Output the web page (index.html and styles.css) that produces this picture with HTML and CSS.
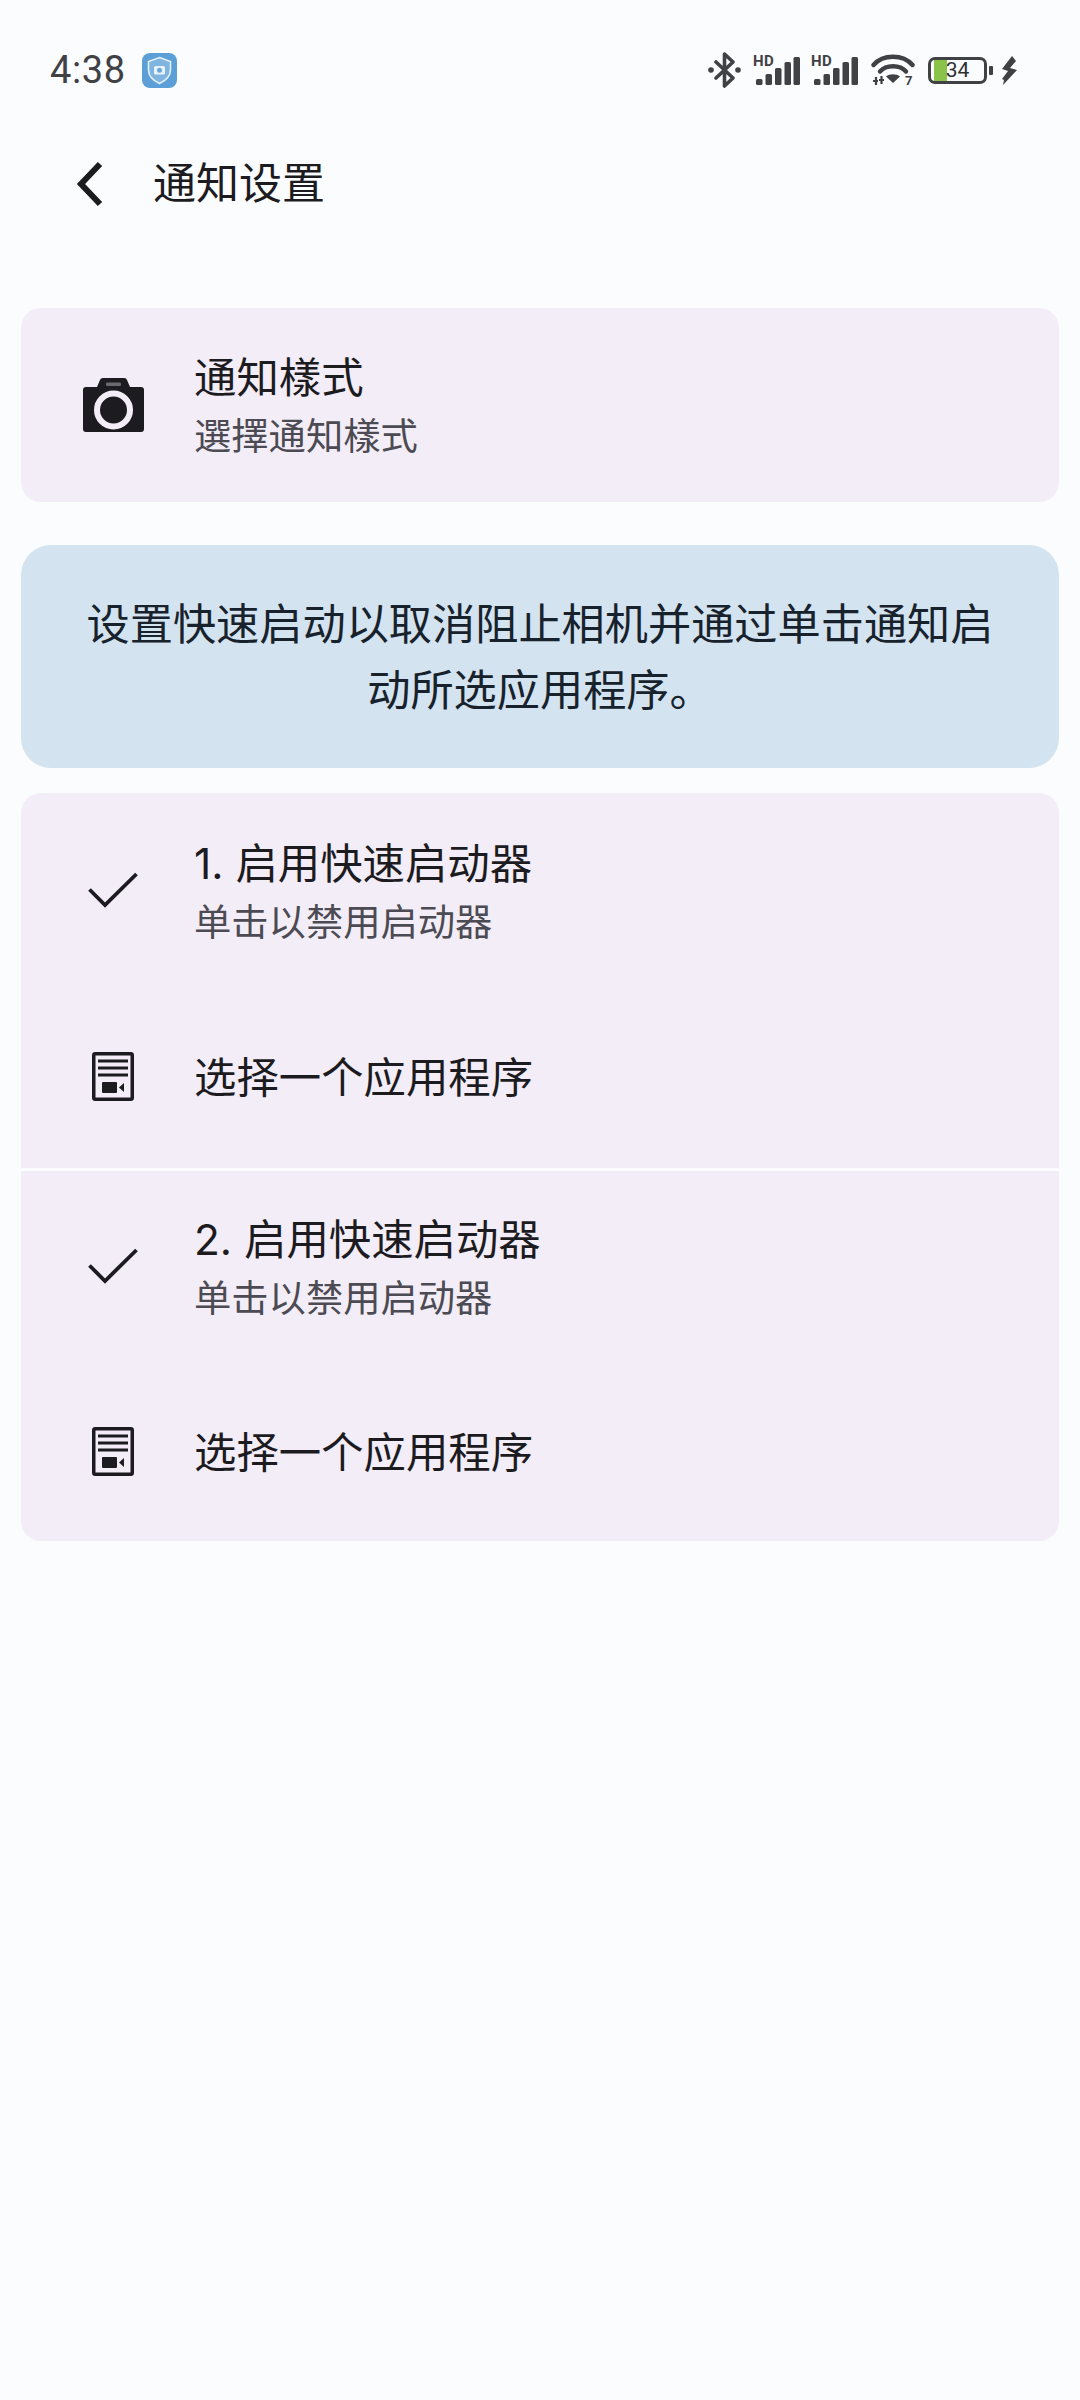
FILE: index.html
```html
<!DOCTYPE html>
<html lang="zh-CN">
<head>
<meta charset="utf-8">
<title>通知设置</title>
<link rel="stylesheet" href="styles.css">
</head>
<body>
<div class="status">
  <div class="status-left">
    <span class="time">4:38</span>
    <svg class="app-badge" width="35" height="35" viewBox="0 0 35 35">
      <rect width="35" height="35" rx="8" fill="#5b9fd6"/>
      <path d="M17.5 4.5 L28.5 8.5 V17 C28.5 23 24 27.5 17.5 30.5 C11 27.5 6.5 23 6.5 17 V8.5 Z" fill="#7fb5e0" stroke="#e4f0fa" stroke-width="1.6"/>
      <rect x="12" y="13" width="11" height="8.5" rx="1.5" fill="#e9f3fb"/>
      <circle cx="17.5" cy="17.2" r="2.5" fill="#6aa7da"/>
    </svg>
  </div>
  <div class="status-right">
    <svg class="i-bt" width="33" height="36" viewBox="0 0 33 36">
      <path d="M8 10 L25 26 L16.5 34 V2 L25 10 L8 26" fill="none" stroke="#3f4145" stroke-width="3.6" stroke-linejoin="round" stroke-linecap="round"/>
      <circle cx="3" cy="18" r="2.8" fill="#3f4145"/>
      <circle cx="30" cy="18" r="2.8" fill="#3f4145"/>
    </svg>
    <svg class="i-sig" width="47" height="40" viewBox="0 -4 47 40">
      <text class="hd" x="0" y="12">HD</text>
      <rect x="3" y="25" width="6.5" height="6" rx="1.5" fill="#3f4145"/>
      <rect x="12.5" y="20" width="6.5" height="11" rx="1.5" fill="#3f4145"/>
      <rect x="22" y="14" width="6.5" height="17" rx="1.5" fill="#3f4145"/>
      <rect x="31.5" y="8" width="6.5" height="23" rx="1.5" fill="#3f4145"/>
      <rect x="40.5" y="3" width="6.5" height="28" rx="1.5" fill="#3f4145"/>
    </svg>
    <svg class="i-sig" width="47" height="40" viewBox="0 -4 47 40">
      <text class="hd" x="0" y="12">HD</text>
      <rect x="3" y="25" width="6.5" height="6" rx="1.5" fill="#3f4145"/>
      <rect x="12.5" y="20" width="6.5" height="11" rx="1.5" fill="#3f4145"/>
      <rect x="22" y="14" width="6.5" height="17" rx="1.5" fill="#3f4145"/>
      <rect x="31.5" y="8" width="6.5" height="23" rx="1.5" fill="#3f4145"/>
      <rect x="40.5" y="3" width="6.5" height="28" rx="1.5" fill="#3f4145"/>
    </svg>
    <svg class="i-wifi" width="44" height="36" viewBox="0 0 44 36">
      <g fill="none" stroke="#3f4145" stroke-width="4.4" stroke-linecap="round">
        <path d="M2.5 13 C12 2 32 2 41.5 13"/>
        <path d="M9 19.5 C15 12.5 29 12.5 35 19.5"/>
      </g>
      <path d="M15 24.5 C18.5 21.5 25.5 21.5 29 24.5 L22 31 Z" fill="#3f4145"/>
      <path d="M5 25 V33 M10.5 24 V32 M2 29 H7 M8 28 H13" stroke="#3f4145" stroke-width="2.2" fill="none"/>
      <text class="wifi-num" x="34" y="33">7</text>
    </svg>
    <div class="battery-wrap">
      <div class="battery"><span>34</span></div>
      <div class="nub"></div>
    </div>
    <svg class="i-bolt" width="17" height="29" viewBox="0 0 17 29">
      <path d="M11 0 L1 13 L7 15 L1 23 L3 24 L2 29 L16 14 L9 12 L15 5 Z" fill="#3f4145"/>
    </svg>
  </div>
</div>

<header class="appbar">
  <svg width="27" height="46" viewBox="0 0 27 46">
    <path d="M24 3 L5 23 L24 43" fill="none" stroke="#1c1b1f" stroke-width="6"/>
  </svg>
  <h1 class="appbar-title">通知设置</h1>
</header>

<main class="content">
  <section class="card card-single">
    <div class="row">
      <div class="slot">
        <svg width="61" height="54" viewBox="0 0 61 54">
          <path d="M3 9 H14 L17 2 Q17.5 0 20 0 H41 Q43.5 0 44 2 L47 9 H58 Q61 9 61 12 V51 Q61 54 58 54 H3 Q0 54 0 51 V12 Q0 9 3 9 Z" fill="#1c1b1f"/>
          <rect x="23" y="4.5" width="15" height="3.5" rx="1" fill="#6b6870"/>
          <circle cx="30.5" cy="32" r="16.5" fill="none" stroke="#f3edf7" stroke-width="6"/>
        </svg>
      </div>
      <div class="texts texts-top">
        <div class="title">通知樣式</div>
        <div class="sub">選擇通知樣式</div>
      </div>
    </div>
  </section>

  <section class="notice">
    <p>设置快速启动以取消阻止相机并通过单击通知启动所选应用程序。</p>
  </section>

  <section class="card card-list">
    <div class="group group-1">
      <div class="row row-a">
        <div class="slot">
          <svg class="i-check" width="50" height="36" viewBox="0 0 50 36">
            <path d="M1.5 17.5 L17 33 L48.5 2" fill="none" stroke="#1c1b1f" stroke-width="3.8"/>
          </svg>
        </div>
        <div class="texts">
          <div class="title">1. 启用快速启动器</div>
          <div class="sub">单击以禁用启动器</div>
        </div>
      </div>
      <div class="row row-b">
        <div class="slot">
          <svg class="i-doc" width="42" height="49" viewBox="0 0 42 49">
            <rect x="1.75" y="1.75" width="38.5" height="45.5" rx="1.5" fill="none" stroke="#1c1b1f" stroke-width="3.5"/>
            <path d="M6 9 H36 M6 16 H36 M6 23 H36" stroke="#1c1b1f" stroke-width="3"/>
            <rect x="10" y="30" width="15" height="11" rx="1" fill="#1c1b1f"/>
            <path d="M27 35.5 L32 31 V40 Z" fill="#1c1b1f"/>
          </svg>
        </div>
        <div class="texts"><div class="title">选择一个应用程序</div></div>
      </div>
    </div>
    <div class="group group-2">
      <div class="row row-a">
        <div class="slot">
          <svg class="i-check" width="50" height="36" viewBox="0 0 50 36">
            <path d="M1.5 17.5 L17 33 L48.5 2" fill="none" stroke="#1c1b1f" stroke-width="3.8"/>
          </svg>
        </div>
        <div class="texts">
          <div class="title">2. 启用快速启动器</div>
          <div class="sub">单击以禁用启动器</div>
        </div>
      </div>
      <div class="row row-b">
        <div class="slot">
          <svg class="i-doc" width="42" height="49" viewBox="0 0 42 49">
            <rect x="1.75" y="1.75" width="38.5" height="45.5" rx="1.5" fill="none" stroke="#1c1b1f" stroke-width="3.5"/>
            <path d="M6 9 H36 M6 16 H36 M6 23 H36" stroke="#1c1b1f" stroke-width="3"/>
            <rect x="10" y="30" width="15" height="11" rx="1" fill="#1c1b1f"/>
            <path d="M27 35.5 L32 31 V40 Z" fill="#1c1b1f"/>
          </svg>
        </div>
        <div class="texts"><div class="title">选择一个应用程序</div></div>
      </div>
    </div>
  </section>
</main>
</body>
</html>
```
FILE: styles.css
```css
* { box-sizing: border-box; }
html, body { margin: 0; padding: 0; }
body {
  width: 1080px;
  height: 2400px;
  background: #fbfcfe;
  color: #1c1b1f;
  font-family: Inter, "Noto Sans CJK SC", sans-serif;
  overflow: hidden;
}
.status {
  height: 140px;
  display: flex;
  align-items: center;
  justify-content: space-between;
  padding: 0 62px 0 50px;
}
.status-left { display: flex; align-items: center; gap: 16px; }
.time { font-family: Roboto, sans-serif; font-size: 38px; color: #3f4145; line-height: 40px; letter-spacing: .6px; }
.status-right { display: flex; align-items: center; }
.i-bt { margin-right: 12px; }
.i-sig { margin-right: 11px; }
.i-wifi { margin-left: 2px; }
.hd { font: 700 15px Roboto, sans-serif; fill: #3f4145; letter-spacing: .5px; }
.wifi-num { font: 700 13px Roboto, sans-serif; fill: #3f4145; }
.battery-wrap { display: flex; align-items: center; gap: 2px; margin-left: 13px; margin-right: 8px; }
.battery {
  width: 59px;
  height: 27px;
  border: 3.5px solid #3f4145;
  border-radius: 7px;
  background: linear-gradient(90deg, #fbfcfe 0 3px, #8bc34a 3px 16px, #fbfcfe 16px);
  display: flex;
  align-items: center;
  justify-content: center;
  font-family: Roboto, sans-serif;
  font-size: 21px;
  color: #2d2f31;
  line-height: 20px;
}
.nub { width: 4px; height: 9px; background: #3f4145; border-radius: 1px; }

.appbar {
  height: 88px;
  display: flex;
  align-items: center;
  padding-left: 76px;
  gap: 50px;
}
.appbar-title { margin: 0 0 3px; font-size: 43px; font-weight: 400; line-height: 60px; }

.content {
  padding: 80px 21px 0;
  display: flex;
  flex-direction: column;
}
.card { background: #f3edf7; border-radius: 20px; }
.card-single { height: 194px; display: flex; align-items: center; }
.card-single .row { width: 100%; }
.notice {
  margin-top: 43px;
  height: 223px;
  background: #d3e3ef;
  border-radius: 30px;
  display: flex;
  align-items: center;
  padding: 0 60px;
}
.notice p {
  margin: 0;
  width: 100%;
  text-align: center;
  font-size: 43.2px;
  line-height: 66px;
  color: #17222c;
}
.card-list { margin-top: 25px; height: 748px; display: flex; flex-direction: column; overflow: hidden; }
.group { display: flex; flex-direction: column; }
.group-1 { height: 375px; padding-top: 2px; }
.group-2 { height: 373px; border-top: 3px solid #fbfcfe; }
.row { display: flex; align-items: center; padding-left: 62px; }
.group-1 .row-a { height: 190px; }
.group-1 .row-b { height: 183px; }
.group-2 .row-a { height: 189px; }
.group-2 .row-b { height: 181px; padding-top: 2px; }
.slot { width: 111px; flex: none; display: flex; align-items: center; }
.i-check { margin-left: 5px; }
.i-doc { margin-left: 9px; }
.texts { display: flex; flex-direction: column; padding-top: 2px; }
.card-single .texts-top { padding-top: 0; }
.title { font-size: 42.4px; line-height: 64px; white-space: nowrap; }
.sub { font-size: 37.3px; line-height: 54px; color: #4c4a52; white-space: nowrap; }
```
